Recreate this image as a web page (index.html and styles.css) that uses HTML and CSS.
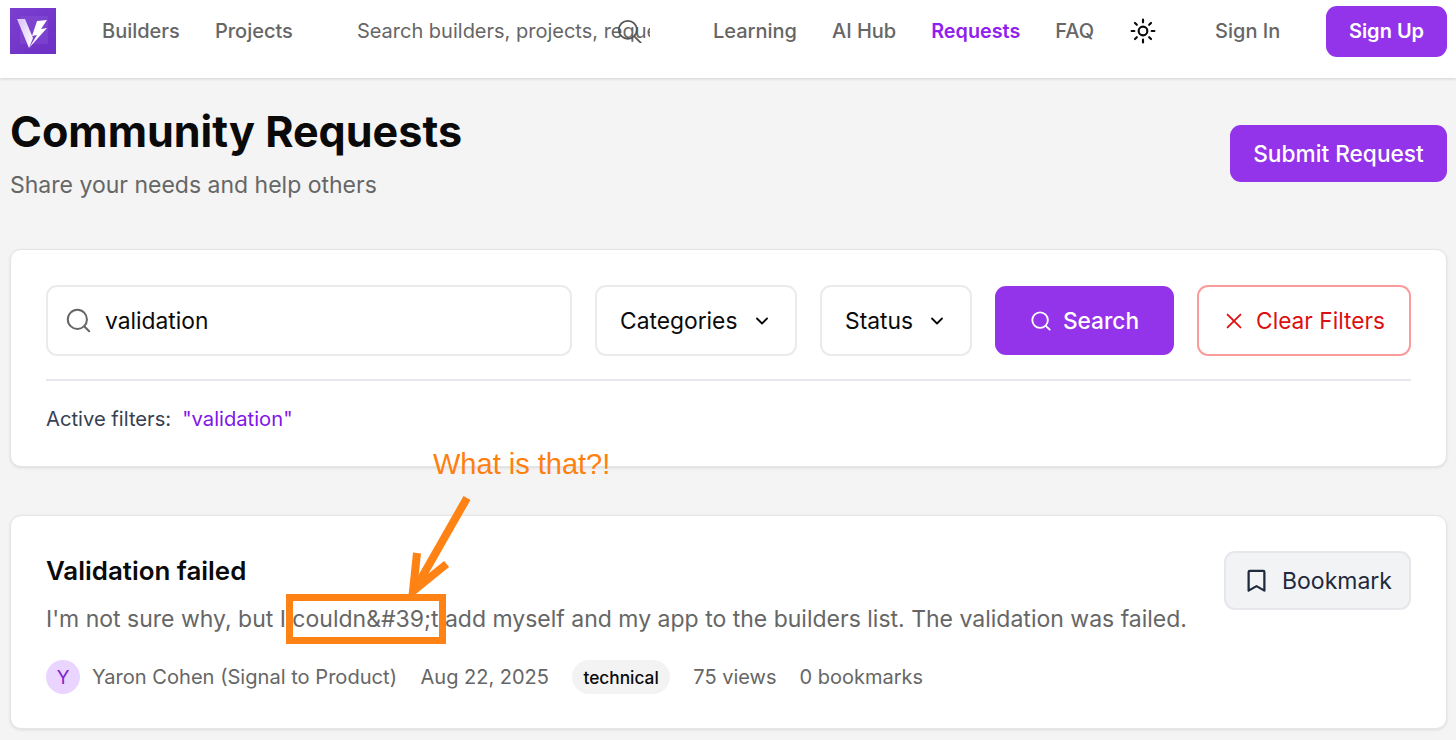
FILE: index.html
```html
<!DOCTYPE html>
<html lang="en">
<head>
<meta charset="utf-8">
<title>Community Requests</title>
<link rel="stylesheet" href="styles.css">
</head>
<body>
<header class="topbar">
  <a class="logo" href="#" aria-label="Home">
    <svg viewBox="0 0 46 46" width="46" height="46">
      <defs>
        <linearGradient id="lg" x1="0" y1="0" x2="1" y2="1"><stop offset="0" stop-color="#7b3fd0"/><stop offset="1" stop-color="#6d2fc4"/></linearGradient>
        <linearGradient id="lv" x1="0" y1="0" x2="1" y2="1"><stop offset="0" stop-color="#d9c2f5"/><stop offset="1" stop-color="#fff"/></linearGradient>
      </defs>
      <rect width="46" height="46" fill="url(#lg)"/>
      <rect x="10" y="8" width="28" height="28" fill="#8a55d8" opacity=".4"/>
      <path d="M7 11h8l8 19-4 10z" fill="url(#lv)"/>
      <path d="M37 12l-10 1-5 15 5-1-8 13 18-20-6 1z" fill="#fff"/>
    </svg>
  </a>
  <nav class="nav nav-left">
    <a href="#">Builders</a>
    <a href="#">Projects</a>
  </nav>
  <div class="topsearch">
    <span class="topsearch-text">Search builders, projects, requests</span>
    <svg class="topsearch-icon" viewBox="0 0 24 24" width="27" height="27" fill="none" stroke="#555" stroke-width="1.6"><circle cx="10.500" cy="10.500" r="8"/><path d="M16.500 16.500l6 6"/></svg>
  </div>
  <nav class="nav nav-right">
    <a href="#">Learning</a>
    <a href="#">AI Hub</a>
    <a href="#" class="active">Requests</a>
    <a href="#">FAQ</a>
  </nav>
  <svg class="sun" viewBox="0 0 24 24" width="26" height="26" fill="none" stroke="#0a0a0a" stroke-width="2" stroke-linecap="round"><circle cx="12" cy="12" r="4"/><path d="M12 1.500v2.500M12 20v2.500M1.500 12H4M20 12h2.500M4.600 4.600l1.700 1.700M17.700 17.700l1.700 1.700M4.600 19.400l1.700-1.700M17.700 6.300l1.700-1.700"/></svg>
  <a class="signin" href="#">Sign In</a>
  <a class="btn-primary signup" href="#">Sign Up</a>
</header>

<main class="page">
  <section class="page-head">
    <div>
      <h1>Community Requests</h1>
      <p class="subtitle">Share your needs and help others</p>
    </div>
    <a class="btn-primary submit" href="#">Submit Request</a>
  </section>

  <section class="card filters">
    <div class="filter-row">
      <div class="field search-field">
        <svg viewBox="0 0 24 24" width="27" height="27" fill="none" stroke="#666" stroke-width="1.800" stroke-linecap="round"><circle cx="11" cy="11" r="8.500"/><path d="M17.500 17.500l4 4"/></svg>
        <span>validation</span>
      </div>
      <div class="field select cat"><span>Categories</span>
        <svg viewBox="0 0 24 24" width="20" height="20" fill="none" stroke="#0a0a0a" stroke-width="2.200" stroke-linecap="round" stroke-linejoin="round"><path d="M6 9l6 6 6-6"/></svg>
      </div>
      <div class="field select stat"><span>Status</span>
        <svg viewBox="0 0 24 24" width="20" height="20" fill="none" stroke="#0a0a0a" stroke-width="2.200" stroke-linecap="round" stroke-linejoin="round"><path d="M6 9l6 6 6-6"/></svg>
      </div>
      <button class="btn-search">
        <svg viewBox="0 0 24 24" width="22" height="22" fill="none" stroke="#fff" stroke-width="2" stroke-linecap="round"><circle cx="11" cy="11" r="8.500"/><path d="M17.500 17.500l4 4"/></svg>
        <span>Search</span>
      </button>
      <button class="btn-clear">
        <svg viewBox="0 0 24 24" width="22" height="22" fill="none" stroke="#e01010" stroke-width="2" stroke-linecap="round"><path d="M5 5l14 14M19 5L5 19"/></svg>
        <span>Clear Filters</span>
      </button>
    </div>
    <div class="active-filters">
      <span class="af-label">Active filters:</span>
      <span class="af-value">"validation"</span>
    </div>
  </section>

  <section class="card request">
    <div class="request-body">
      <h2>Validation failed</h2>
      <p class="desc">I'm not sure why, but I couldn&amp;#39;t add myself and my app to the builders list. The validation was failed.</p>
      <div class="meta">
        <span class="avatar">Y</span>
        <span class="author">Yaron Cohen (Signal to Product)</span>
        <span>Aug 22, 2025</span>
        <span class="tag">technical</span>
        <span>75 views</span>
        <span>0 bookmarks</span>
      </div>
    </div>
    <button class="btn-bookmark">
      <svg viewBox="0 0 24 24" width="27" height="27" fill="none" stroke="#1f2a3d" stroke-width="2" stroke-linejoin="round"><path d="M6 3.500h12a1 1 0 0 1 1 1V21l-7-4-7 4V4.500a1 1 0 0 1 1-1z"/></svg>
      <span>Bookmark</span>
    </button>
  </section>
</main>

<div class="note">What is that?!</div>
<div class="note-box"></div>
<svg class="note-arrow" viewBox="0 0 80 110" width="80" height="110" fill="none" stroke="#ff8214" stroke-width="8"><path d="M64 7L11 100"/><path d="M14 62L10 100l33.600-27"/></svg>
</body>
</html>
```
FILE: styles.css
```css
* { box-sizing: border-box; }
html, body { margin: 0; padding: 0; height: 740px; overflow: hidden; }
body { background: #f4f4f4; font-family: Inter, "Liberation Sans", sans-serif; color: #0a0a0a; position: relative; }
a { text-decoration: none; color: inherit; white-space: nowrap; }
button { font-family: inherit; cursor: pointer; }
svg { display: block; flex: none; }

.topbar { height: 78px; background: #fff; display: flex; align-items: center; padding: 0 9px 16px 10px; box-shadow: 0 1px 3px rgba(0,0,0,.14); }
.nav { display: flex; gap: 35px; font-size: 20px; font-weight: 500; color: #666; flex: none; }
.nav-left { margin-left: 46px; }
.nav .active { color: #9020ee; font-size: 19.800px; font-weight: 600; }
.topsearch { flex: none; width: 293px; margin-left: 64px; position: relative; overflow: hidden; font-size: 20px; color: #666; white-space: nowrap; }
.topsearch-text { display: block; }
.topsearch-icon { position: absolute; right: 7px; top: -1px; }
.nav-right { margin-left: 63px; }
.sun { margin-left: 36px; }
.signin { margin-left: 59px; font-size: 20px; font-weight: 500; color: #666; }
.btn-primary { display: flex; align-items: center; justify-content: center; background: #9333ea; color: #fff; font-weight: 500; border-radius: 11px; }
.signup { margin-left: auto; flex: none; width: 121px; height: 51px; font-size: 20px; font-weight: 600; }

.page { padding: 0 9px 0 10px; }
.page-head { display: flex; justify-content: space-between; align-items: flex-start; height: 171px; padding-top: 27px; }
h1 { margin: 0; font-size: 43.100px; line-height: 52px; font-weight: 700; }
.subtitle { margin: 13px 0 0; font-size: 23px; line-height: 30px; color: #666; }
.submit { width: 217px; height: 57px; margin-top: 20px; font-size: 22.700px; }

.card { background: #fff; border: 1px solid #e5e5e5; border-radius: 11px; box-shadow: 0 1px 3px rgba(0,0,0,.1); padding: 35px; }
.filters { height: 218px; }
.filter-row { display: flex; gap: 23px; height: 96px; padding-bottom: 23px; border-bottom: 2px solid #e8e8ec; align-items: flex-start; }
.field { height: 71px; background: #fff; border: 2px solid #ebebeb; border-radius: 11px; display: flex; align-items: center; font-size: 22.800px; }
.search-field { width: 526px; padding: 0 17px; gap: 13px; }
.select { justify-content: space-between; padding: 0 23px; }
.cat { width: 202px; }
.stat { width: 152px; }
.btn-search { width: 179px; height: 69px; margin-top: 1px; border: 0; border-radius: 11px; background: #9333ea; color: #fff; font-size: 22.700px; font-weight: 500; display: flex; align-items: center; justify-content: center; gap: 11px; }
.btn-clear { width: 214px; height: 71px; background: #fff; border: 2px solid #fb9c9c; border-radius: 11px; color: #dc1010; font-size: 22.700px; font-weight: 400; display: flex; align-items: center; justify-content: center; gap: 11px; }
.active-filters { display: flex; gap: 11px; margin-top: 26px; font-size: 20.200px; line-height: 24px; }
.af-label { color: #364152; }
.af-value { color: #8016e8; }

.request { margin-top: 48px; height: 214px; display: flex; justify-content: space-between; align-items: flex-start; padding-right: 35px; }
.request-body { width: 1170px; white-space: nowrap; }
h2 { margin: 4px 0 0; font-size: 25.900px; line-height: 32px; font-weight: 600; }
.desc { margin: 16px 0 0; font-size: 23px; line-height: 32px; color: #666; }
.meta { display: flex; align-items: center; gap: 23px; margin-top: 25px; font-size: 20px; color: #666; }
.author { font-size: 20.100px; margin-right: .5px; }
.avatar { width: 34px; height: 34px; border-radius: 50%; background: #e9d5ff; color: #7e22ce; display: flex; align-items: center; justify-content: center; font-size: 18.700px; margin-right: -11px; }
.tag { background: #f3f3f3; color: #0a0a0a; font-size: 17.300px; font-weight: 500; height: 34px; padding: 0 11.500px; border-radius: 17px; display: flex; align-items: center; }
.btn-bookmark { width: 187px; height: 59px; background: #f2f3f5; border: 2px solid #e5e7eb; border-radius: 11px; color: #1f2a3d; font-size: 23px; font-weight: 400; display: flex; align-items: center; justify-content: center; gap: 12px; }

.note { position: absolute; left: 433px; top: 447px; font-family: "Liberation Sans", Arial, sans-serif; font-size: 29px; line-height: 34px; color: #ff7f0f; white-space: nowrap; }
.note-box { position: absolute; left: 286px; top: 594px; width: 160px; height: 50px; border: 7px solid #ff8214; }
.note-arrow { position: absolute; left: 403px; top: 491px; }
```
